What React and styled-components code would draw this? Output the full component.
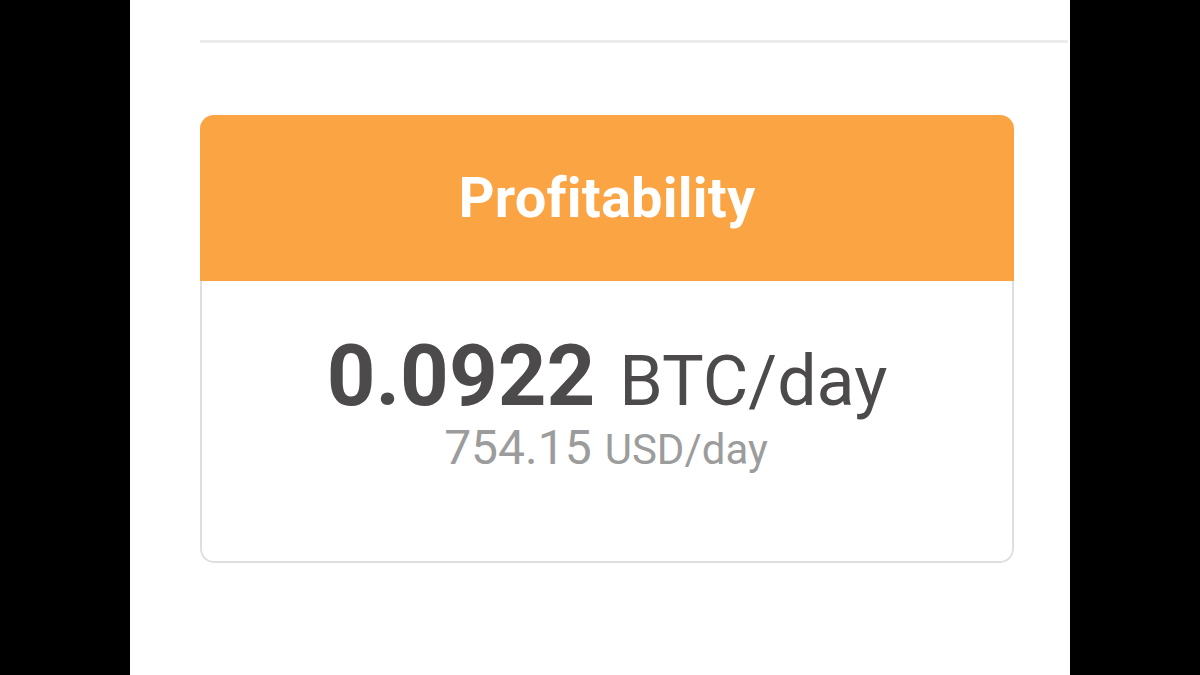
import React from 'react'
import styled, { createGlobalStyle } from 'styled-components'

const GlobalStyle = createGlobalStyle`
  html, body {
    margin: 0;
    padding: 0;
    background: #000;
    font-family: Roboto, "Liberation Sans", sans-serif;
  }
`

const Screen = styled.div`
  width: 1200px;
  height: 675px;
  display: flex;
  justify-content: center;
  background: #000;
  overflow: hidden;
`

const Page = styled.div`
  width: 940px;
  background: #fff;
  padding: 40px 0 0 70px;
  box-sizing: border-box;
`

const Divider = styled.div`
  height: 3px;
  background: #ececec;
  margin-right: 2px;
`

const Card = styled.div`
  width: 814px;
  margin-top: 72px;
  border-radius: 14px;
  overflow: hidden;
`

const CardHeader = styled.div`
  height: 166px;
  background: #fba444;
  display: flex;
  align-items: center;
  justify-content: center;
`

const Title = styled.h3`
  margin: 0;
  color: #fff;
  font-size: 56px;
  font-weight: 700;
  letter-spacing: 0.2px;
`

const CardBody = styled.div`
  height: 282px;
  box-sizing: border-box;
  border: 2px solid #dedede;
  border-top: none;
  border-radius: 0 0 14px 14px;
  display: flex;
  flex-direction: column;
  align-items: center;
  padding-top: 61px;
`

const Line = styled.div`
  display: flex;
  align-items: baseline;
  gap: ${p => p.gap}px;
  color: ${p => p.color};
  line-height: 0.8;
  white-space: nowrap;
  margin-top: ${p => p.top || 0}px;
  margin-left: ${p => p.shift || 0}px;
`

const Amount = styled.span`
  font-size: ${p => p.size}px;
  font-weight: ${p => (p.bold ? 700 : 400)};
`

export default function App() {
  return (
    <Screen>
      <GlobalStyle />
      <Page>
        <Divider />
        <Card>
          <CardHeader>
            <Title>Profitability</Title>
          </CardHeader>
          <CardBody>
            <Line gap={24} color="#4c4a4a">
              <Amount size={85} bold>0.0922</Amount>
              <Amount size={70}>BTC/day</Amount>
            </Line>
            <Line gap={13} color="#9c9c9c" top={19} shift={-2}>
              <Amount size={48}>754.15</Amount>
              <Amount size={42}>USD/day</Amount>
            </Line>
          </CardBody>
        </Card>
      </Page>
    </Screen>
  )
}
